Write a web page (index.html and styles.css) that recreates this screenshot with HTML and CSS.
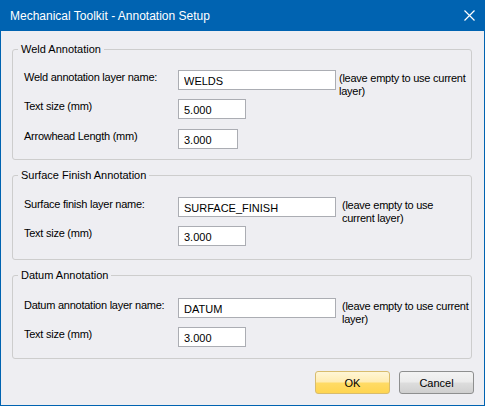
FILE: index.html
```html
<!DOCTYPE html>
<html lang="en">
<head>
  <meta charset="UTF-8" />
  <title>Mechanical Toolkit - Annotation Setup</title>
  <link rel="stylesheet" href="styles.css">
</head>
<body>

  <div class="window">
    <!-- Title bar -->
    <div class="titlebar">
      <span class="title">Mechanical Toolkit - Annotation Setup</span>
      <svg class="close" width="11" height="11" viewBox="0 0 11 11">
        <path d="M0.5 0.5 L10.5 10.5 M10.5 0.5 L0.5 10.5" stroke="#fff" stroke-width="1.2" fill="none"/>
      </svg>
    </div>

    <div class="content">
      <!-- Weld -->
      <fieldset class="group group-weld">
        <legend>Weld Annotation</legend>
        <div class="row">
          <label>Weld annotation layer name:</label>
          <input class="field field-wide" type="text" value="WELDS" />
          <span class="note">(leave empty to use current<br>layer)</span>
        </div>
        <div class="row">
          <label>Text size (mm)</label>
          <input class="field field-mid" type="text" value="5.000" />
        </div>
        <div class="row row-last">
          <label>Arrowhead Length (mm)</label>
          <input class="field field-short" type="text" value="3.000" />
        </div>
      </fieldset>

      <!-- Surface finish -->
      <fieldset class="group group-surface">
        <legend>Surface Finish Annotation</legend>
        <div class="row">
          <label>Surface finish layer name:</label>
          <input class="field field-wide" type="text" value="SURFACE_FINISH" />
          <span class="note note-narrow">(leave empty to use<br>current layer)</span>
        </div>
        <div class="row">
          <label>Text size (mm)</label>
          <input class="field field-mid" type="text" value="3.000" />
        </div>
      </fieldset>

      <!-- Datum -->
      <fieldset class="group group-datum">
        <legend>Datum Annotation</legend>
        <div class="row">
          <label>Datum annotation layer name:</label>
          <input class="field field-wide" type="text" value="DATUM" />
          <span class="note note-narrow">(leave empty to use current<br>layer)</span>
        </div>
        <div class="row">
          <label>Text size (mm)</label>
          <input class="field field-mid" type="text" value="3.000" />
        </div>
      </fieldset>

      <div class="buttons">
        <button class="btn btn-ok">OK</button>
        <button class="btn">Cancel</button>
      </div>
    </div>
  </div>

</body>
</html>
```

FILE: styles.css
```css
body {
  margin: 0;
  font-family: "Liberation Sans", Arial, sans-serif;
  font-size: 11px;
  color: #000;
  background: #eeeef2;
}

.window {
  width: 485px;
  height: 406px;
  box-sizing: border-box;
  border: 1px solid #0063b1;
  border-top: none;
  background: #eeeef2;
  display: flex;
  flex-direction: column;
}

.titlebar {
  height: 31px;
  flex: none;
  background: #0063b1;
  color: #fff;
  display: flex;
  align-items: center;
  justify-content: space-between;
  padding: 0 9px 0 9px;
}

.title {
  font-family: "Liberation Sans", Arial, sans-serif;
  font-size: 12px;
  margin-top: 1px;
}

.close {
  display: block;
  margin-top: 0;
}

.content {
  flex: 1;
  display: flex;
  flex-direction: column;
  padding: 12px 10px 11px 11px;
}

/* Group boxes */
.group {
  width: 460px;
  box-sizing: border-box;
  margin: 0;
  border: 1px solid #cdcdcd;
  border-radius: 3px;
  padding: 14px 0 10px 11px;
  min-width: 0;
}

.group legend {
  margin-left: -6px;
  padding: 0 3px;
  line-height: 13px;
}

.group-surface {
  margin-top: 9px;
  padding-top: 15px;
  padding-bottom: 13px;
}

.group-datum {
  margin-top: 9px;
  padding-top: 16px;
  padding-bottom: 11px;
}

.row {
  display: flex;
  align-items: flex-start;
  height: 20px;
}

.row + .row {
  margin-top: 9px;
}

.group-weld .row-last {
  margin-top: 10px;
}

.row label {
  width: 154px;
  flex: none;
  line-height: 13px;
  padding-top: 1px;
  letter-spacing: -0.25px;
}

.field {
  height: 20px;
  box-sizing: border-box;
  margin: 0;
  border: 1px solid #abadb3;
  padding: 1px 5px 0;
  background: #fff;
  font-family: "Liberation Sans", Arial, sans-serif;
  font-size: 11px;
  color: #000;
  outline: none;
}

.field-wide { width: 158px; }
.field-mid { width: 68px; }
.field-short { width: 60px; }

.note {
  margin-left: 3px;
  padding-top: 2px;
  line-height: 13px;
  white-space: nowrap;
  letter-spacing: -0.25px;
}

.note-narrow {
  margin-left: 6px;
}

/* Buttons */
.buttons {
  margin-top: auto;
  display: flex;
  justify-content: flex-end;
  gap: 9px;
}

.btn {
  width: 75px;
  height: 23px;
  margin: 0;
  padding: 0;
  border: 1px solid #8e8f8f;
  border-radius: 3px;
  font-family: "Liberation Sans", Arial, sans-serif;
  font-size: 11px;
  color: #000;
  background: linear-gradient(#f3f3f3 0%, #ebebeb 48%, #dddddd 52%, #cfcfcf 100%);
}

.btn-ok {
  border-color: #d8bc6e;
  background: linear-gradient(#fff6d6 0%, #ffecb2 48%, #ffdb66 52%, #ffd550 100%);
}
```
